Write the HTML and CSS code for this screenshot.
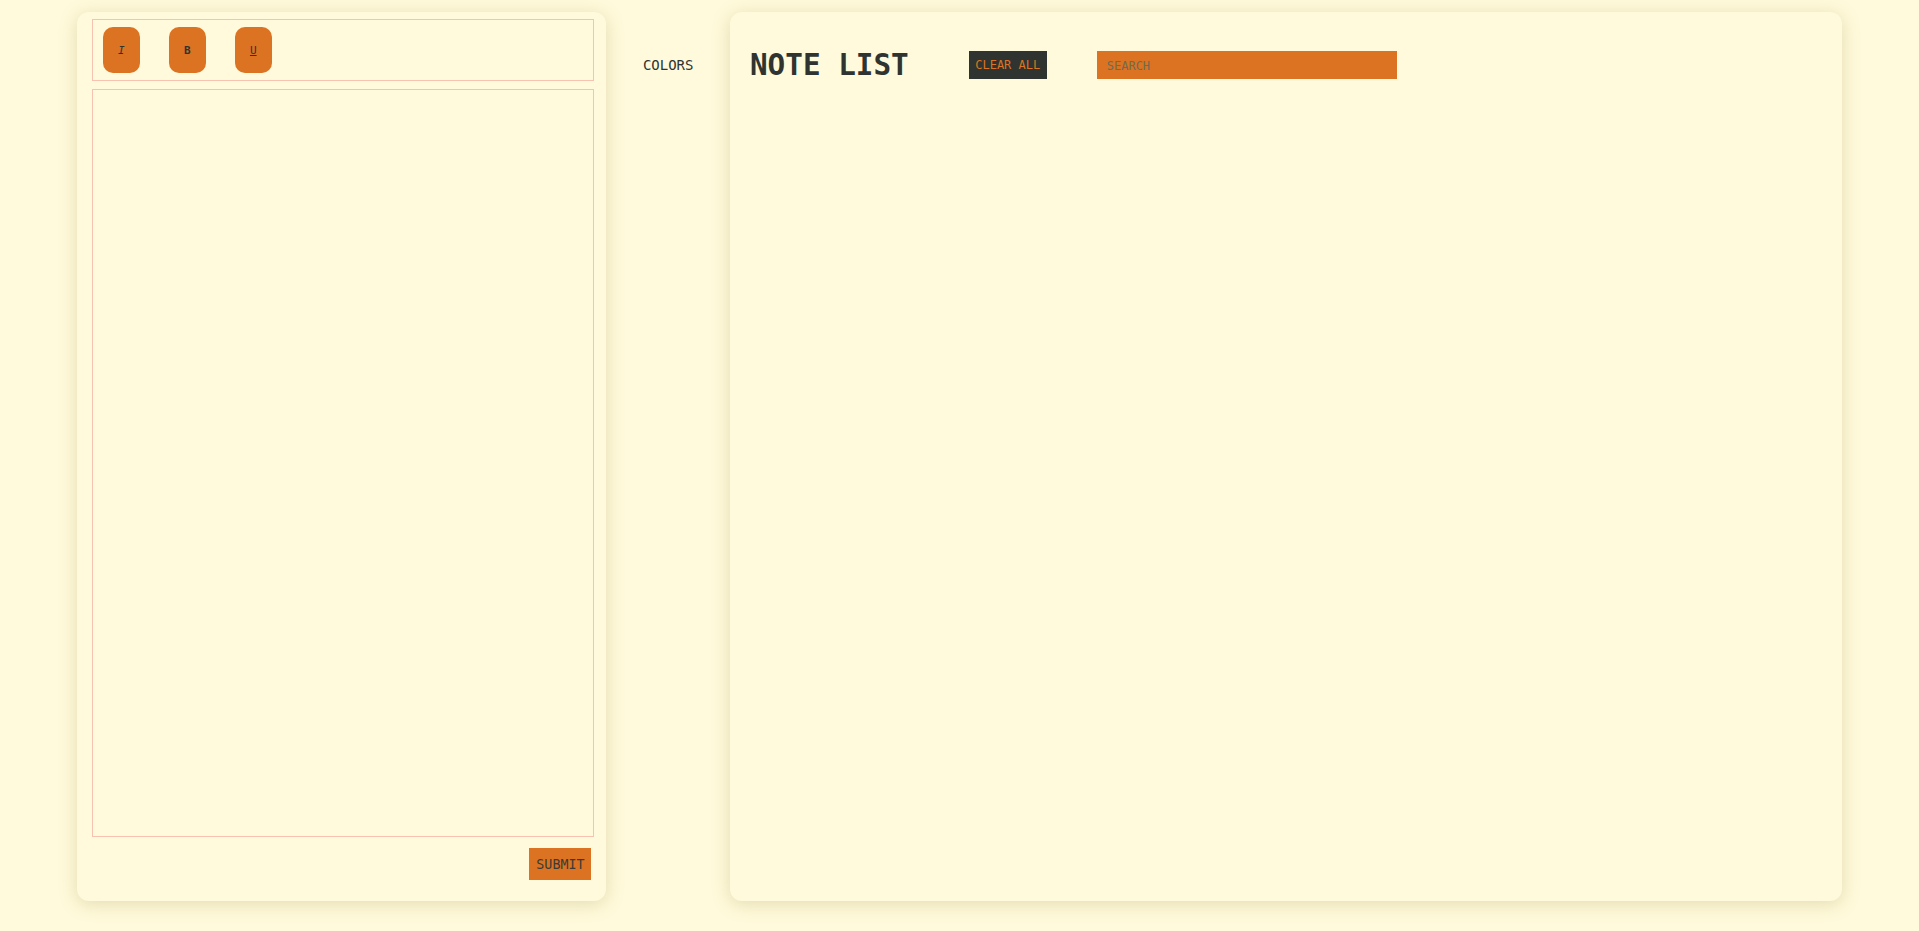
FILE: index.html
```html
<!DOCTYPE html>
<html lang="en">
<head>
<meta charset="utf-8">
<title>Notes</title>
<link rel="stylesheet" href="styles.css">
</head>
<body>
<div class="app">
  <section class="editor-panel">
    <div class="toolbar">
      <button class="tool-btn italic">I</button>
      <button class="tool-btn bold">B</button>
      <button class="tool-btn underline">U</button>
    </div>
    <div class="editor" contenteditable="true"></div>
    <div class="submit-row">
      <button class="submit">SUBMIT</button>
    </div>
  </section>
  <div class="colors">COLORS</div>
  <section class="notes-panel">
    <header class="notes-header">
      <h1 class="title">NOTE LIST</h1>
      <button class="clear">CLEAR ALL</button>
      <input class="search" type="text" placeholder="SEARCH">
    </header>
  </section>
</div>
</body>
</html>
```

FILE: styles.css
```css
* { box-sizing: border-box; }
html, body { height: 100%; }
body {
  margin: 0;
  background: #fffadb;
  font-family: "DejaVu Sans Mono", monospace;
  color: #2f3430;
}
.app {
  width: 92%;
  margin: 12px auto 0;
  display: flex;
  height: 889px;
}
.editor-panel {
  flex: 0 0 30%;
  background: #fffadb;
  border-radius: 12px;
  box-shadow: 0 3px 18px rgba(150, 130, 50, 0.25);
  padding: 7px 12px 0 15px;
  display: flex;
  flex-direction: column;
}
.toolbar {
  height: 62px;
  border: 1px solid #f8c2b0;
  padding: 7px 10px;
  display: flex;
  gap: 29px;
}
.tool-btn {
  width: 37px;
  height: 46px;
  border: none;
  border-radius: 10px;
  background: #db7322;
  color: #2f3430;
  font-family: "DejaVu Sans Mono", monospace;
  font-size: 11px;
  padding: 0;
}
.tool-btn.italic { font-style: italic; }
.tool-btn.bold { font-weight: bold; }
.tool-btn.underline { text-decoration: underline; }
.editor {
  margin-top: 8px;
  height: 748px;
  border: 1px solid #f8c2b0;
  outline: none;
}
.submit-row {
  display: flex;
  justify-content: flex-end;
  padding: 11px 3px 0 0;
}
.submit {
  width: 62px;
  height: 32px;
  border: none;
  background: #db7322;
  color: #3a3a36;
  font-family: "DejaVu Sans Mono", monospace;
  font-size: 13.33px;
  padding: 0;
}
.colors {
  flex: 0 0 7%;
  text-align: center;
  font-size: 14px;
  padding-top: 45px;
  color: #2f3430;
}
.notes-panel {
  flex: 1;
  background: #fffadb;
  border-radius: 12px;
  box-shadow: 0 3px 18px rgba(150, 130, 50, 0.25);
  padding: 36px 20px;
}
.notes-header {
  display: flex;
  align-items: center;
}
.title {
  margin: 0;
  font-size: 29.3px;
  font-weight: bold;
  color: #2f3430;
}
.clear {
  margin-left: 60px;
  width: 78px;
  height: 28px;
  border: none;
  background: #2f3430;
  color: #db7322;
  font-family: "DejaVu Sans Mono", monospace;
  font-size: 12px;
  padding: 0;
}
.search {
  margin-left: 50px;
  width: 300px;
  height: 28px;
  border: none;
  background: #db7322;
  padding: 2px 10px 0;
  font-family: "DejaVu Sans Mono", monospace;
  font-size: 12px;
  color: #2f3430;
  outline: none;
}
.search::placeholder { color: #6f6a55; }
```
